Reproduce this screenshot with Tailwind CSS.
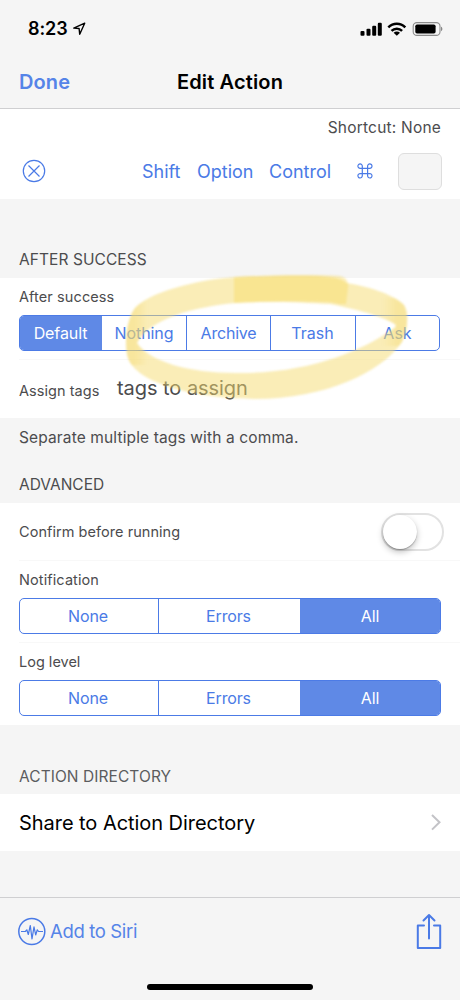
<!DOCTYPE html>
<html lang="en">
<head>
<meta charset="utf-8">
<title>Edit Action</title>
<script src="https://cdn.jsdelivr.net/npm/@tailwindcss/browser@4"></script>
</head>
<body class="bg-[#f5f5f5]">
<div class="relative flex h-[1000px] w-[460px] flex-col overflow-hidden bg-[#f5f5f5] font-['Inter',sans-serif] text-[#4c4c4e]">

  <header class="h-[109px] shrink-0 border-b border-[#cfcfd1] text-black">
    <div class="flex h-[57px] items-center pl-[28px] pr-[17px]">
      <span class="text-[18px] font-semibold tracking-[-0.1px]">8:23</span>
      <svg class="ml-[4px]" width="14" height="14" viewBox="0 0 14 14" fill="none" stroke="#000" stroke-width="1.4" stroke-linejoin="round"><path d="M12.7 1.2 1.8 6.1 7.1 6.5 7.7 12.2Z"/></svg>
      <svg class="ml-auto" width="22" height="14" viewBox="0 0 22 14"><rect x="0.500" y="9" width="4" height="4.8" rx="1.1"/><rect x="6.500" y="6.7" width="4" height="7.1" rx="1.1"/><rect x="12.200" y="3.8" width="4" height="10" rx="1.1"/><rect x="17.800" y="0.8" width="4" height="13" rx="1.1"/></svg>
      <svg class="ml-[5px]" width="20" height="14" viewBox="0 0 20 14" fill="none" stroke="#000" stroke-width="2.5"><path d="M1.3 5.3C6.2.5 13.400.5 18.300 5.300M4.500 8.800C7.500 5.900 12.100 5.900 15.100 8.800"/><path d="M6.600 10.700C8.500 9.100 11.100 9.100 13 10.700L9.800 13.800Z" fill="#000" stroke="none"/></svg>
      <svg class="ml-[5px]" width="31" height="14" viewBox="0 0 31 14"><rect x="1.200" y=".6" width="26.800" height="12.800" rx="3.700" fill="none" stroke="#8c8c8c" stroke-width="1.100"/><rect x="3.300" y="2.500" width="20.300" height="9" rx="1.700"/><path d="M29.100 4.800C30.700 5.400 30.700 8.600 29.100 9.200Z" fill="#777"/></svg>
    </div>
    <div class="grid h-[49px] grid-cols-[1fr_auto_1fr] items-center px-[19px] text-[20px] font-semibold">
      <span class="tracking-[0.1px] text-[#5584e8]">Done</span>
      <span class="tracking-[0.150px]">Edit Action</span>
    </div>
  </header>

  <section class="h-[90px] shrink-0 bg-white px-[19px]">
    <div class="flex h-[38px] items-center justify-end text-[15.500px] tracking-[0.200px]">Shortcut: None</div>
    <div class="flex h-[48px] items-center pl-[3px] text-[18px] text-[#4a7ae6]">
      <svg width="24" height="24" viewBox="0 0 24 24" fill="none" stroke="#4a7ae6" stroke-width="1.200"><circle cx="12" cy="12" r="10.700"/><path d="m6.500 6.500 11 11m0-11-11 11"/></svg>
      <span class="ml-[96px] w-[55px]">Shift</span>
      <span class="w-[72px]">Option</span>
      <span class="w-[88px]">Control</span>
      <svg width="16" height="16" viewBox="0 0 16 16" fill="none" stroke="#4a7ae6" stroke-width="1.200"><path d="M5.300 5.300H3.300A2.200 2.200 0 1 1 5.300 3.200V12.800A2.200 2.200 0 1 1 3.300 10.600H12.700A2.200 2.200 0 1 1 10.600 12.800V3.200A2.200 2.200 0 1 1 12.700 5.300Z"/></svg>
      <span class="-mr-px ml-auto h-[37px] w-[44px] rounded-[6px] border border-[#dedede] bg-[#f5f5f5]"></span>
    </div>
  </section>

  <h2 class="flex h-[79px] shrink-0 items-end px-[19px] pb-[7px] text-[15.500px] leading-[23px] tracking-[0.070px]">AFTER SUCCESS</h2>

  <section class="h-[140px] shrink-0 bg-white pl-[19px]">
    <div class="h-[82px] border-b border-[#f8f8f8] pt-[8px]">
      <div class="h-[29px] text-[14.500px] leading-[21px] tracking-[0.100px]">After success</div>
      <div class="grid h-[36px] w-[421px] grid-cols-[82px_84px_84px_85px_84px] overflow-hidden rounded-[5px] border-[1.500px] border-[#4c7be6] text-center text-[16px] leading-[34px] text-[#4a7ae6]">
        <span class="bg-[#5f89e6] pr-px tracking-[-0.100px] text-white">Default</span>
        <span class="tracking-[-0.100px]">Nothing</span>
        <span class="border-l border-[#4c7be6] tracking-[-0.200px]">Archive</span>
        <span class="border-l border-[#4c7be6] pr-px">Trash</span>
        <span class="border-l border-[#4c7be6]">Ask</span>
      </div>
    </div>
    <div class="flex h-[58px] pt-[14px]">
      <span class="w-[98px] pt-[6px] text-[14.500px] leading-[22px] tracking-[0.050px]">Assign tags</span>
      <span class="text-[20px] leading-[28px] tracking-[-0.050px]">tags to assign</span>
    </div>
  </section>

  <div class="h-[85px] shrink-0 px-[19px] pt-[8px] text-[15.500px] leading-[24px]">
    <p class="tracking-[0.130px]">Separate multiple tags with a comma.</p>
    <h2 class="mt-[23px]">ADVANCED</h2>
  </div>

  <section class="h-[222px] shrink-0 bg-white pl-[19px]">
    <div class="flex h-[58px] items-center justify-between border-b border-[#f8f8f8] pr-[16px] text-[14.500px] tracking-[0.050px]">
      <span>Confirm before running</span>
      <span class="flex h-[38px] w-[63px] items-center rounded-full border-2 border-[#e2e2e2] bg-white"><span class="h-[34px] w-[34px] rounded-full bg-white shadow-[0_3px_6px_rgba(0,0,0,0.250),0_1px_1px_rgba(0,0,0,0.250)]"></span></span>
    </div>
    <div class="h-[82px] border-b border-[#f8f8f8] pt-[8px]">
      <div class="h-[29px] text-[14.500px] leading-[22px] tracking-[0.100px]">Notification</div>
      <div class="grid h-[36px] w-[422px] grid-cols-[138px_142px_140px] overflow-hidden rounded-[5px] border-[1.500px] border-[#4c7be6] text-center text-[16px] leading-[34px] tracking-[-0.150px] text-[#4a7ae6]">
        <span class="pr-[2px]">None</span><span class="border-l border-[#4c7be6] pr-[2px]">Errors</span><span class="bg-[#5f89e6] text-white">All</span>
      </div>
    </div>
    <div class="h-[82px] pt-[8px]">
      <div class="h-[29px] text-[14.500px] leading-[22px]">Log level</div>
      <div class="grid h-[36px] w-[422px] grid-cols-[138px_142px_140px] overflow-hidden rounded-[5px] border-[1.500px] border-[#4c7be6] text-center text-[16px] leading-[34px] tracking-[-0.150px] text-[#4a7ae6]">
        <span class="pr-[2px]">None</span><span class="border-l border-[#4c7be6] pr-[2px]">Errors</span><span class="bg-[#5f89e6] text-white">All</span>
      </div>
    </div>
  </section>

  <h2 class="flex h-[69px] shrink-0 items-end px-[19px] pb-[5px] text-[15.500px] leading-[24px] tracking-[0.070px] text-[#5c5c5e]">ACTION DIRECTORY</h2>

  <section class="flex h-[57px] shrink-0 items-center justify-between bg-white pl-[19px] pr-[18px] text-[20px] text-black">
    <span class="tracking-[-0.050px]">Share to Action Directory</span>
    <svg width="12" height="18" viewBox="0 0 12 18" fill="none" stroke="#c3c3c7" stroke-width="2"><path d="m2 1 7.500 7.300L2 15.600"/></svg>
  </section>

  <footer class="mt-[46px] flex h-[103px] shrink-0 flex-col items-center border-t border-[#cfcfd1]">
    <div class="flex h-[68px] w-full items-center pl-[17px] pr-[18px] text-[18.500px] text-[#5584e8]">
      <svg class="-mt-[2px]" width="29" height="29" viewBox="0 0 29 29" fill="none" stroke="#4a7ae6" stroke-width="1.500" stroke-linejoin="round"><circle cx="14.800" cy="14.500" r="13"/><path stroke-width="1.200" d="M4 14.500H8.300L9.800 12.800 11.300 17.500 13.300 8.500 15 21.800 17 9.800 18.700 18 20.300 12.800 21.600 14.500H26"/></svg>
      <span class="ml-[4px] tracking-[-0.350px]">Add to Siri</span>
      <svg class="-mt-[2px] ml-auto" width="26" height="36" viewBox="0 0 26 36" fill="none" stroke="#4a7ae6" stroke-width="2" stroke-linecap="round" stroke-linejoin="round"><path d="M8 12.500H1.800V35H24.200V12.500H18M13 25.500V2M7.500 7.500 13 2 18.500 7.500"/></svg>
    </div>
    <div class="mt-[18px] h-[6px] w-[166px] rounded-full bg-black"></div>
  </footer>

  <!-- Highlighter stroke over the segmented control -->
  <svg class="pointer-events-none absolute left-0 top-0 blur-[0.800px]" width="460" height="420" viewBox="0 0 460 420">
    <defs>
      <linearGradient id="left" gradientUnits="userSpaceOnUse" x1="126" y1="0" x2="148" y2="0"><stop offset="0" stop-color="#f4d560" stop-opacity=".3"/><stop offset=".4" stop-color="#f4d560" stop-opacity=".3"/><stop offset="1" stop-color="#f4d560" stop-opacity="0"/></linearGradient>
      <linearGradient id="right" gradientUnits="userSpaceOnUse" x1="408" y1="0" x2="382" y2="0"><stop offset="0" stop-color="#f4d560" stop-opacity=".3"/><stop offset=".4" stop-color="#f4d560" stop-opacity=".3"/><stop offset="1" stop-color="#f4d560" stop-opacity="0"/></linearGradient>
      <path id="ring" d="M236 277C195 280 150 292 135 308C126 320 124 345 128 358C136 382 190 398 255 399C325 399 382 372 402 342C408 330 409 313 404 305C392 293 365 286 346 283C340 274 300 275 236 277ZM235 303C195 307 150 318 137 343C150 362 190 373 235 373C310 374 362 350 390 331C398 326 397 325 391 322C375 314 350 308 330 304C300 302 260 301 235 303Z"/>
      <clipPath id="ringclip"><use href="#ring" clip-rule="evenodd"/></clipPath>
    </defs>
    <use href="#ring" fill="#f6dc70" fill-opacity=".5" fill-rule="evenodd"/>
    <path fill="#f8d95e" fill-opacity=".42" d="M234 277C270 275 310 274 340 276Q349 278 348 287L346 304H340L330 302C300 301 270 301 234 303Z"/>
    <g clip-path="url(#ringclip)">
      <rect x="120" y="300" width="30" height="65" fill="url(#left)"/>
      <rect x="380" y="298" width="30" height="48" fill="url(#right)"/>
    </g>
  </svg>
</div>
</body>
</html>
